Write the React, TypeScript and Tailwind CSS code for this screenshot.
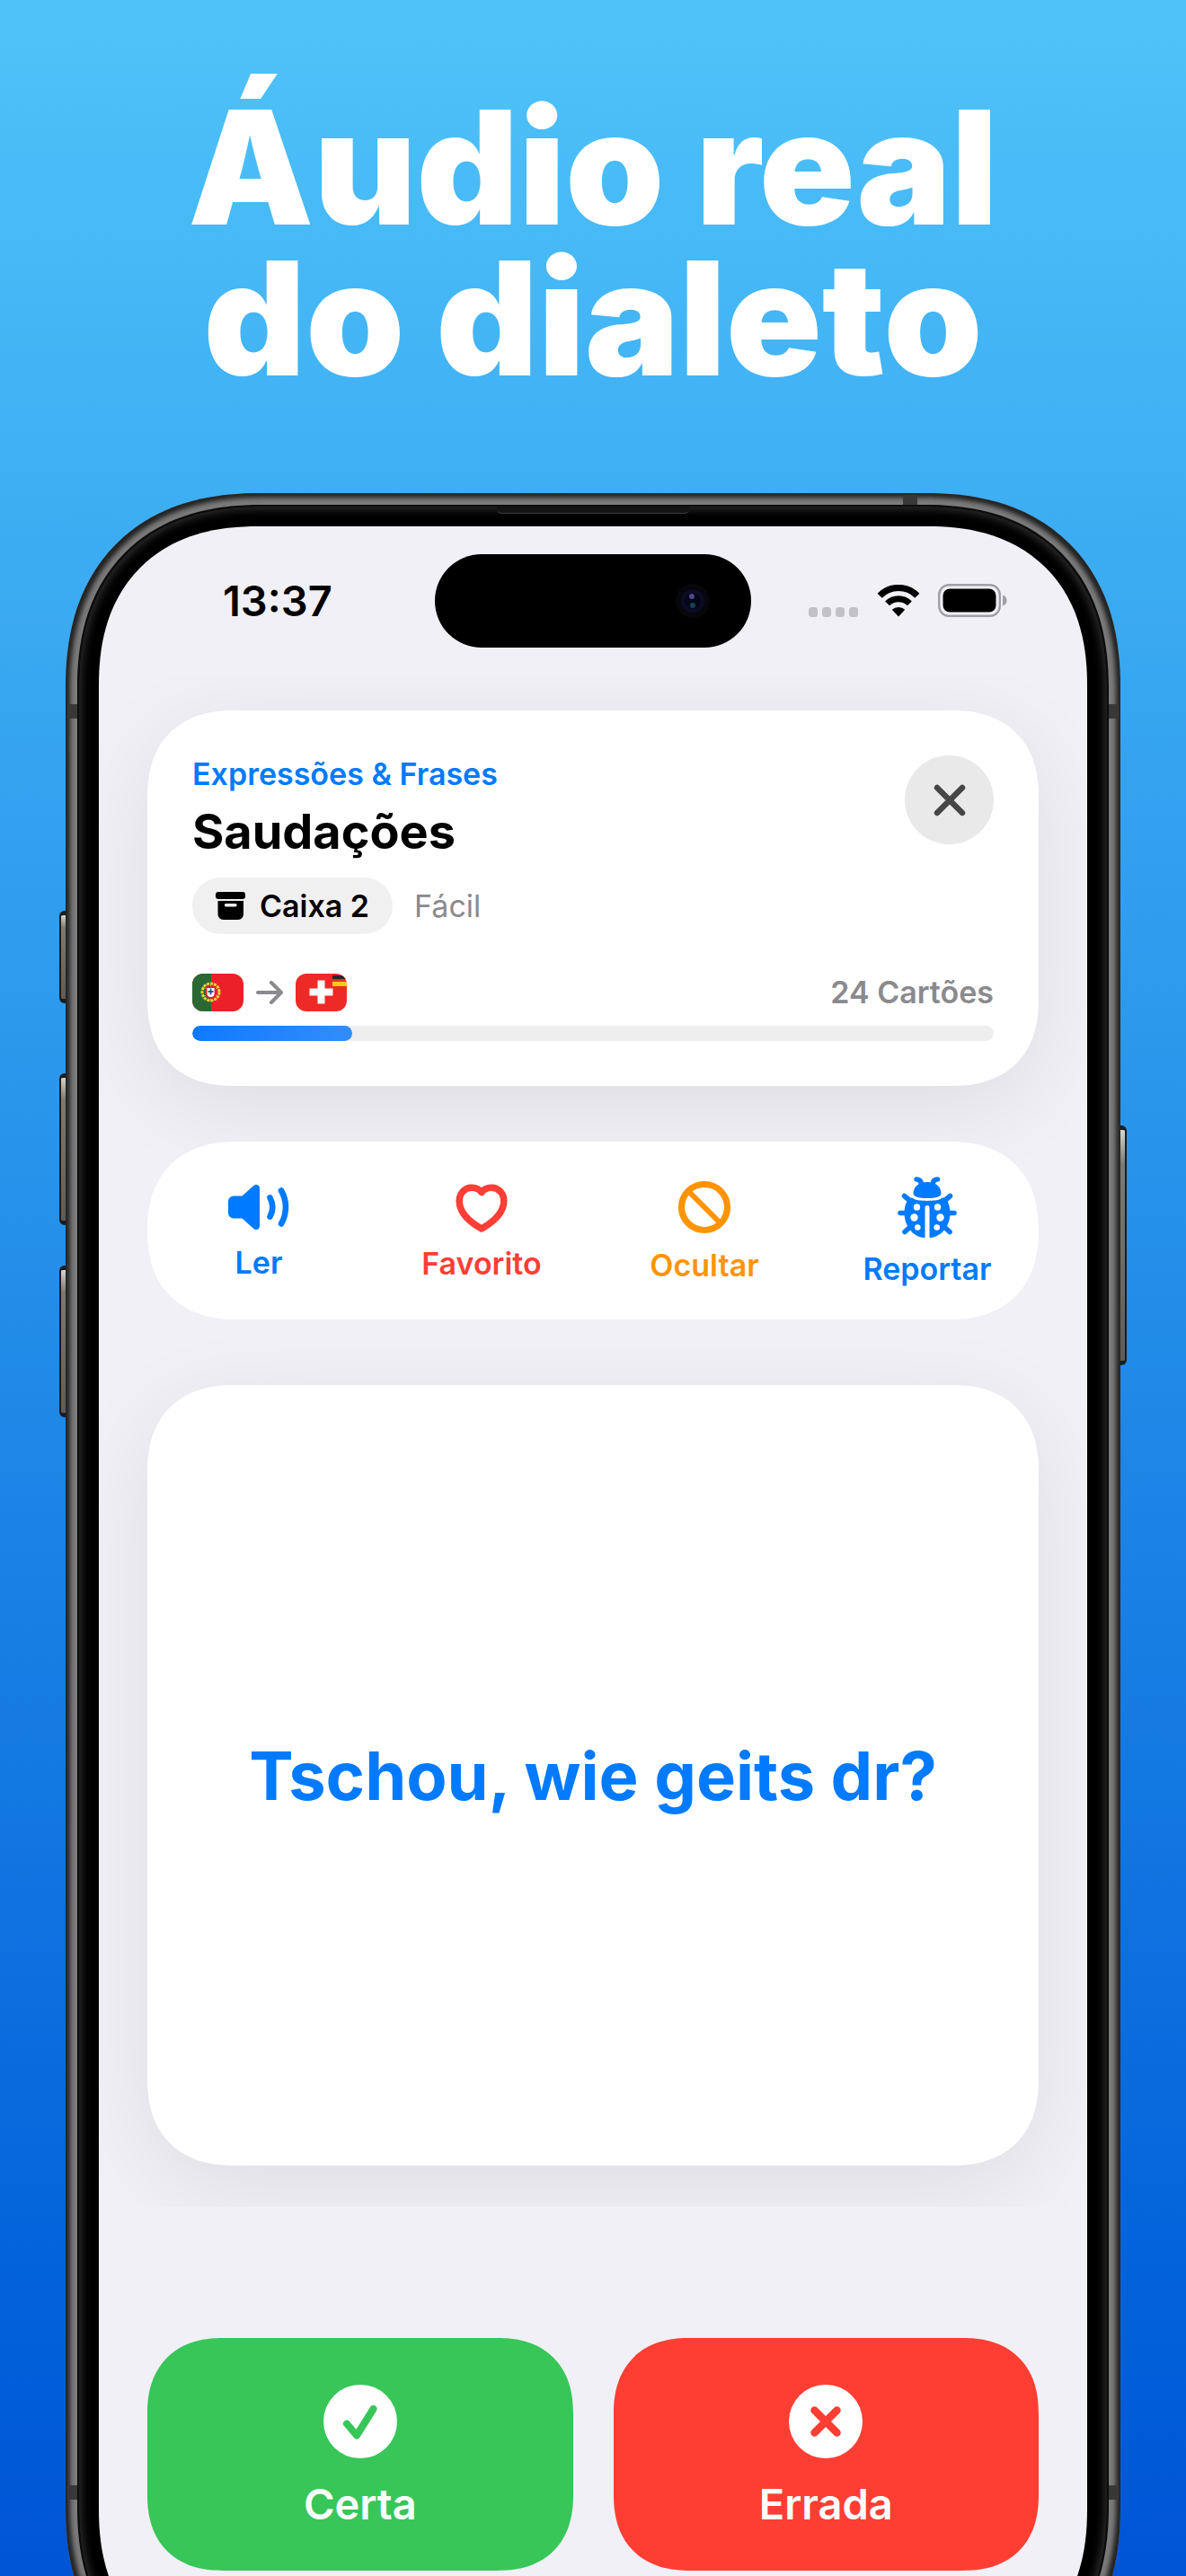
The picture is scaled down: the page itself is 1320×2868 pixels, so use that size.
import React from "react";

const squircle =
  "supports-[corner-shape:round]:[corner-shape:superellipse(1.2)]";

function StatusBar() {
  return (
    <div className="relative grid h-[165px] grid-cols-[1fr_352px_1fr] items-center text-black">
      <div className="pl-[138px] text-[47px] leading-[56px] font-semibold">13:37</div>
      <div className="flex h-[104px] items-center justify-end rounded-full bg-black pr-[45px]">
        <svg viewBox="0 0 40 40" className="size-10" aria-hidden="true">
          <circle cx="20" cy="20" r="19" fill="#07060b" />
          <circle cx="20" cy="20" r="13" fill="#0b0b26" />
          <circle cx="20" cy="20" r="9" fill="#050518" />
          <circle cx="19" cy="15" r="3" fill="#4a4890" />
          <circle cx="20" cy="25" r="3" fill="#13414f" />
        </svg>
      </div>
      <div className="flex items-center justify-end gap-5 pr-[89px]">
        <svg viewBox="0 0 56 36" className="h-9 w-14" fill="#c2c1c6" aria-hidden="true">
          <rect x="0" y="25" width="10" height="11" rx="3.5" />
          <rect x="15" y="25" width="10" height="11" rx="3.5" />
          <rect x="30" y="25" width="10" height="11" rx="3.5" />
          <rect x="45" y="25" width="10" height="11" rx="3.5" />
        </svg>
        <svg viewBox="0 0 48 36" className="h-9 w-12" fill="none" stroke="#000" aria-hidden="true">
          <path d="M3.2 12.2a29 29 0 0 1 41.6 0" strokeWidth="7.2" />
          <path d="M11.6 20.9a17.5 17.5 0 0 1 24.8 0" strokeWidth="7" />
          <path d="M24 35.4l-7.2-7.6a10.4 10.4 0 0 1 14.4 0z" fill="#000" stroke="none" />
        </svg>
        <svg viewBox="0 0 77 37" className="h-[37px] w-[77px]" aria-hidden="true">
          <rect x="1.2" y="1.2" width="67.6" height="34.6" rx="11" fill="none" stroke="#a09fa4" strokeWidth="2.4" />
          <rect x="5.5" y="5.5" width="59" height="26" rx="7.5" fill="#000" />
          <path d="M72 12.5c3 1 4.5 3.2 4.5 6s-1.5 5-4.5 6z" fill="#a09fa4" />
        </svg>
      </div>
    </div>
  );
}

function PortugalFlag() {
  return (
    <svg viewBox="0 0 57 42" className="h-[42px] w-[57px] rounded-xl" role="img" aria-label="Português">
      <rect width="57" height="42" fill="#ec2029" />
      <rect width="21" height="42" fill="#2b6835" />
      <circle cx="20.5" cy="20.5" r="9.5" fill="none" stroke="#e5d93a" strokeWidth="3" strokeDasharray="3 1" />
      <path d="M12 15l17 11M12 26l17-11M20.5 10v21" stroke="#c8b62c" strokeWidth="1" />
      <path d="M15.5 15h10v7a5 5 0 0 1-10 0z" fill="#fff" stroke="#d9232b" strokeWidth="1.8" />
      <path d="M20.5 16.5v7M17.5 20h6" stroke="#31509a" strokeWidth="1.8" />
    </svg>
  );
}

function SwissFlag() {
  return (
    <svg viewBox="0 0 57 42" className="h-[42px] w-[57px] rounded-xl" role="img" aria-label="Suíço-alemão">
      <rect width="57" height="42" fill="#ee2a26" />
      <path d="M24.5 7.5h8v9h9v8h-9v9h-8v-9h-9v-8h9z" fill="#fff" />
      <rect x="41" y="2" width="16" height="4" fill="#2b2425" />
      <rect x="41" y="9" width="16" height="5" fill="#fcc81e" />
    </svg>
  );
}

function LessonCard() {
  return (
    <section className={`rounded-[84px] bg-white p-[50px] shadow-[0_24px_100px_rgba(0,0,0,0.08)] supports-[corner-shape:round]:rounded-[96px] ${squircle}`}>
      <div className="flex items-start justify-between">
        <div>
          <p className="text-[34px] leading-[42px] font-semibold text-[#007aff]">Expressões &amp; Frases</p>
          <h2 className="mt-2.5 text-[54px] leading-[66px] font-bold text-black">Saudações</h2>
          <div className="mt-[18px] flex items-center gap-6">
            <span className="flex h-[63px] items-center gap-4 rounded-full bg-[#f0f0f0] px-[26px] text-[34px] font-semibold text-black">
              <svg viewBox="0 0 33 31" className="h-[31px] w-[33px]" aria-hidden="true">
                <rect width="33" height="8" rx="3" />
                <path fillRule="evenodd" d="M2.5 10h28.5v15a6 6 0 0 1-6 6h-16.5a6 6 0 0 1-6-6zM11.5 13a1.5 1.5 0 0 0 0 3.4h10.5a1.5 1.5 0 0 0 0-3.4z" />
              </svg>
              Caixa 2
            </span>
            <span className="text-[34px] text-[#8a8a8e]">Fácil</span>
          </div>
        </div>
        <button type="button" aria-label="Fechar" className="flex size-[99px] items-center justify-center rounded-full bg-[#e9e9e9]">
          <svg viewBox="0 0 36 36" className="size-9" fill="none" stroke="#464646" strokeWidth="6.5" strokeLinecap="round" aria-hidden="true">
            <path d="M4 4l28 28M32 4L4 32" />
          </svg>
        </button>
      </div>
      <div className="mt-11 flex items-center gap-3.5">
        <PortugalFlag />
        <svg viewBox="0 0 30 26" className="h-[26px] w-[30px]" fill="none" stroke="#8a8a8e" strokeWidth="4" strokeLinecap="round" strokeLinejoin="round" aria-hidden="true">
          <path d="M2 13h26M17 2l11 11-11 11" />
        </svg>
        <SwissFlag />
        <span className="ml-auto text-[34px] leading-[42px] font-semibold text-[#8a8a8e]">24 Cartões</span>
      </div>
      <div role="progressbar" aria-label="Progresso" aria-valuenow={20} className="mt-4 h-[17px] overflow-hidden rounded-full bg-[#eeeeee]">
        <div className="h-full w-1/5 rounded-full bg-linear-to-r from-[#0a7aff] to-[#318dfb]" />
      </div>
    </section>
  );
}

function SpeakerIcon() {
  return (
    <svg viewBox="0 0 70 54" className="h-[54px] w-[70px]" fill="none" stroke="currentColor" strokeLinecap="round" aria-hidden="true">
      <path d="M7 14.5h9.500L29 3.200c2.500-2.200 7-1.500 7 2.800v42c0 4.300-4.500 5-7 2.800L16.500 39.500H7a6 6 0 0 1-6-6v-13a6 6 0 0 1 6-6z" fill="currentColor" stroke="none" />
      <path d="M47.500 16.500a22 22 0 0 1 0 21M60 8.500a37 37 0 0 1 0 37" strokeWidth="6.6" />
    </svg>
  );
}

function HeartIcon() {
  return (
    <svg viewBox="0 0 58 57" className="h-[57px] w-[58px]" fill="none" stroke="currentColor" strokeWidth="7.5" strokeLinejoin="round" aria-hidden="true">
      <path d="M29 12.5C26.500 9 22.500 7.300 18 7.300 10.500 7.300 4.200 13.500 4.200 22c0 12 10.800 23 24.800 31 14-8 24.800-19 24.800-31 0-8.500-6.300-14.700-13.800-14.700-4.500 0-8.500 1.700-11 5.200z" />
    </svg>
  );
}

function HideIcon() {
  return (
    <svg viewBox="0 0 60 60" className="size-[60px]" fill="none" stroke="currentColor" aria-hidden="true">
      <circle cx="30" cy="30" r="25.5" strokeWidth="7.2" />
      <path d="M12.5 12.5l35 35" strokeWidth="6" />
    </svg>
  );
}

function LadybugIcon() {
  return (
    <svg viewBox="0 0 66 68" className="h-[68px] w-[66px]" aria-hidden="true">
      <g fill="none" stroke="currentColor" strokeWidth="5.6" strokeLinecap="round">
        <path d="M21 3c3.5.3 5.5 2.5 5.5 6M44.500 3c-3.500.3-5.500 2.500-5.500 6" />
        <path d="M7.500 21.500l7 6M58.500 21.500l-7 6M3 40.500h8M63 40.500h-8M8 61.500l6-5.500M58 61.500l-6-5.500" />
      </g>
      <path d="M17.500 19C17.500 11 24 6 33 6s15.500 5 15.500 13c0 3-6 5-15.500 5s-15.500-2-15.500-5z" fill="currentColor" />
      <path d="M12.500 24.500c2-1.500 4.500-1 6 .5 4.500 2.500 24.500 2.500 29 0 1.500-1.500 4-2 6-.5C57 29 58.500 34 58.500 40.500 58.500 55 49 67 36.500 68c-.7 0-1-.4-1-1V34.500a2.500 2.500 0 0 0-5 0V67c0 .6-.3 1-1 1C17 67 7.500 55 7.500 40.500 7.500 34 9 29 12.500 24.500z" fill="currentColor" />
      <g fill="#fff">
        <circle cx="21.500" cy="34" r="3.700" />
        <circle cx="44.500" cy="34" r="3.700" />
        <circle cx="18.500" cy="45.500" r="4.200" />
        <circle cx="47.500" cy="45.500" r="4.200" />
        <circle cx="22.300" cy="56.500" r="3.300" />
        <circle cx="43.700" cy="56.500" r="3.300" />
      </g>
    </svg>
  );
}

const actions = [
  { label: "Ler", color: "text-[#007aff]", icon: <SpeakerIcon /> },
  { label: "Favorito", color: "text-[#ff3e35]", icon: <HeartIcon /> },
  { label: "Ocultar", color: "text-[#ff9400]", icon: <HideIcon /> },
  { label: "Reportar", color: "text-[#007aff]", icon: <LadybugIcon /> },
];

function Actions() {
  return (
    <nav className={`mt-[62px] grid h-[198px] grid-cols-4 rounded-[99px] bg-white pt-0.5 ${squircle}`}>
      {actions.map((a) => (
        <button key={a.label} type="button" className={`flex flex-col items-center justify-center gap-[15px] text-[34px] leading-10 font-semibold ${a.color}`}>
          {a.icon}
          {a.label}
        </button>
      ))}
    </nav>
  );
}

function Answers() {
  return (
    <div className="grid grid-cols-2 gap-[45px] px-[54px] pt-[146px] pb-[109px] text-[47px] leading-[56px] font-semibold text-white">
      <button type="button" className={`flex flex-col items-center rounded-[72px] bg-[#38c659] pt-[52px] pb-[46px] supports-[corner-shape:round]:rounded-[84px] ${squircle}`}>
        <svg viewBox="0 0 82 82" className="size-[82px]" fill="none" strokeLinecap="round" strokeLinejoin="round" aria-hidden="true">
          <circle cx="41" cy="41" r="41" fill="#fff" />
          <path d="M26 43.5l11 13L55.5 27" stroke="#38c659" strokeWidth="8" />
        </svg>
        <span className="mt-[23px]">Certa</span>
      </button>
      <button type="button" className={`flex flex-col items-center rounded-[72px] bg-[#ff3e33] pt-[52px] pb-[46px] supports-[corner-shape:round]:rounded-[84px] ${squircle}`}>
        <svg viewBox="0 0 82 82" className="size-[82px]" fill="none" strokeLinecap="round" aria-hidden="true">
          <circle cx="41" cy="41" r="41" fill="#fff" />
          <path d="M28.5 28.5l25 25M53.5 28.5l-25 25" stroke="#ff3e33" strokeWidth="8.5" />
        </svg>
        <span className="mt-[23px]">Errada</span>
      </button>
    </div>
  );
}

const sideKey =
  "absolute w-[9px] border-y-[5px] border-[#1c1c1c] bg-linear-to-b from-[#d8d8d2] via-[#7a7a76] via-15% to-[#5c5c59]";

const antenna = "absolute bg-[#383838]";

function Phone() {
  return (
    <div className="relative mx-[73px] mt-[111px]">
      <span className={`${sideKey} -left-[7px] top-[465px] h-[103px] rounded-l-md border-l-2`} />
      <span className={`${sideKey} -left-[7px] top-[646px] h-[169px] rounded-l-md border-l-2`} />
      <span className={`${sideKey} -left-[7px] top-[860px] h-[169px] rounded-l-md border-l-2`} />
      <span className={`${sideKey} -right-[7px] top-[704px] h-[267px] rounded-r-md border-r-2`} />
      <div className={`relative rounded-[197px] bg-[#7a7a7a] p-[13px] shadow-[inset_0_0_5px_5px_#232323] supports-[corner-shape:round]:rounded-[217px] ${squircle}`}>
        <span className={`${antenna} top-0.5 right-[226px] h-3 w-4`} />
        <span className={`${antenna} top-[235px] left-0.5 h-4 w-3`} />
        <span className={`${antenna} top-[235px] right-0.5 h-4 w-3`} />
        <span className={`${antenna} bottom-[225px] left-0.5 h-4 w-3`} />
        <span className={`${antenna} right-0.5 bottom-[225px] h-4 w-3`} />
        <div className={`relative rounded-[184px] border-2 border-[#0c0c0c] bg-black p-[22px] shadow-[inset_0_0_10px_3px_#2c2c2c] supports-[corner-shape:round]:rounded-[204px] ${squircle}`}>
          <span className="absolute top-0 left-1/2 h-2 w-[215px] -translate-x-1/2 rounded-b-md border-b border-[#3a3a3a] bg-[#141414]" />
          <main className={`overflow-hidden rounded-[157px] bg-[#f1f0f6] supports-[corner-shape:round]:rounded-[177px] ${squircle}`}>
            <StatusBar />
            <div className="overflow-hidden px-[54px] pt-10 pb-[46px]">
              <LessonCard />
              <Actions />
              <section className={`mt-[73px] flex h-[869px] items-center justify-center rounded-[84px] bg-white shadow-[0_24px_100px_rgba(0,0,0,0.08)] supports-[corner-shape:round]:rounded-[96px] ${squircle}`}>
                <p className="text-center text-[74px] leading-[92px] font-bold text-[#007aff]">Tschou, wie geits dr?</p>
              </section>
            </div>
            <Answers />
          </main>
        </div>
      </div>
    </div>
  );
}

export default function App() {
  return (
    <div className="h-screen overflow-hidden bg-linear-to-b from-[#4fc3f9] to-[#0054d6] font-['Inter',sans-serif]">
      <h1 className="pt-[102px] text-center text-[176px] leading-[168px] font-black text-white">
        Áudio real
        <br />
        do dialeto
      </h1>
      <Phone />
    </div>
  );
}
